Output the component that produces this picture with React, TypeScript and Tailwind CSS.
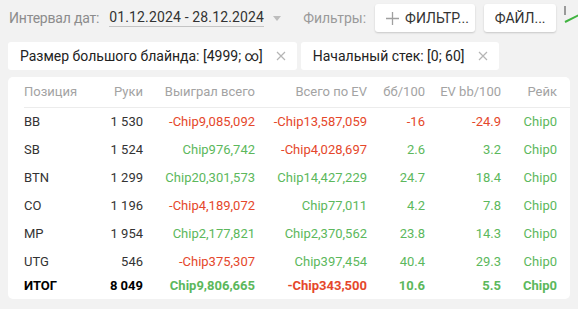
import React from "react"

type Row = {
  pos: string
  hands: string
  won: string
  ev: string
  bb: string
  evbb: string
  rake: string
  total?: boolean
}

const rows: Row[] = [
  { pos: "BB", hands: "1 530", won: "-Chip9,085,092", ev: "-Chip13,587,059", bb: "-16", evbb: "-24.9", rake: "Chip0" },
  { pos: "SB", hands: "1 524", won: "Chip976,742", ev: "-Chip4,028,697", bb: "2.6", evbb: "3.2", rake: "Chip0" },
  { pos: "BTN", hands: "1 299", won: "Chip20,301,573", ev: "Chip14,427,229", bb: "24.7", evbb: "18.4", rake: "Chip0" },
  { pos: "CO", hands: "1 196", won: "-Chip4,189,072", ev: "Chip77,011", bb: "4.2", evbb: "7.8", rake: "Chip0" },
  { pos: "MP", hands: "1 954", won: "Chip2,177,821", ev: "Chip2,370,562", bb: "23.8", evbb: "14.3", rake: "Chip0" },
  { pos: "UTG", hands: "546", won: "-Chip375,307", ev: "Chip397,454", bb: "40.4", evbb: "29.3", rake: "Chip0" },
  { pos: "ИТОГ", hands: "8 049", won: "Chip9,806,665", ev: "-Chip343,500", bb: "10.6", evbb: "5.5", rake: "Chip0", total: true },
]

// красный для отрицательных, зелёный для остальных
const tone = (v: string) => (v.startsWith("-") ? "text-[#e5472b]" : "text-[#5cb85c]")

const cols = "grid grid-cols-[66px_53px_112px_112px_58px_76px_56px]"

function Chip({ label }: { label: string }) {
  return (
    <div className="flex h-7 shrink-0 items-center whitespace-nowrap rounded-[3px] bg-white pl-3 pr-[11px]">
      <span className="text-[14px] text-[#222]">{label}</span>
      <svg className="ml-[13px]" width="10" height="10" viewBox="0 0 10 10">
        <path d="M1 1L9 9M9 1L1 9" stroke="#b5b5b5" strokeWidth="1.2" />
      </svg>
    </div>
  )
}

export default function App() {
  return (
    <div className="h-[309px] w-[578px] overflow-hidden bg-[#f2f2f2] font-['Roboto',sans-serif]">
      {/* Верхняя панель */}
      <div className="flex h-[35px] items-center whitespace-nowrap pl-[9px] pt-[1px] [&>*]:shrink-0">
        <span className="text-[14px] tracking-[-0.2px] text-[#8c8c8c]">Интервал дат:</span>
        <span className="ml-[10px] border-b border-[#c4c4c4] text-[14px] leading-[17px] tracking-[0.15px] text-[#333]">
          01.12.2024 - 28.12.2024
        </span>
        <svg className="ml-[9px]" width="8" height="5" viewBox="0 0 8 5">
          <path d="M0 0H8L4 5Z" fill="#bdbdbd" />
        </svg>
        <span className="ml-[22px] text-[14px] text-[#9a9a9a]">Фильтры:</span>
        <button className="ml-[9px] flex h-[28px] w-[100px] items-center rounded-[3px] bg-white pl-[10px] shadow-[0_1px_2px_rgba(0,0,0,0.18)]">
          <svg width="15" height="15" viewBox="0 0 15 15">
            <path d="M7.5 1V14M1 7.5H14" stroke="#a0a0a0" strokeWidth="1.3" />
          </svg>
          <span className="ml-[5px] text-[14px] text-[#333]">ФИЛЬТР...</span>
        </button>
        <button className="ml-[9px] flex h-[28px] w-[72px] items-center justify-center rounded-[3px] bg-white shadow-[0_1px_2px_rgba(0,0,0,0.18)]">
          <span className="text-[14px] text-[#333]">ФАЙЛ...</span>
        </button>
        <svg className="ml-[7px] mt-[4px] self-start" width="16" height="20" viewBox="0 0 16 20">
          <path d="M2 1V10" stroke="#9a9a9a" strokeWidth="2" />
          <path d="M2 17L16 10" stroke="#3fb33f" strokeWidth="2" />
        </svg>
      </div>

      {/* Активные фильтры */}
      <div className="mt-[7px] flex gap-1 pl-2">
        <Chip label="Размер большого блайнда: [4999; ∞]" />
        <Chip label="Начальный стек: [0; 60]" />
      </div>

      {/* Таблица */}
      <div className="mx-2 mt-[7px] rounded-[5px] bg-white pb-[3px] pl-4 text-[13px]">
        <div className={`${cols} h-[31px] items-center border-b border-[#ececec] text-[#a3a3a3]`}>
          <span>Позиция</span>
          <span className="text-right">Руки</span>
          <span className="text-right">Выиграл всего</span>
          <span className="text-right">Всего по EV</span>
          <span className="text-right">бб/100</span>
          <span className="text-right">EV bb/100</span>
          <span className="text-right">Рейк</span>
        </div>
        {rows.map((r) => (
          <div
            key={r.pos}
            className={`${cols} items-center ${r.total ? "h-[20px] font-bold" : "h-[28px]"}`}
          >
            <span className={r.total ? "text-black" : "text-[#333]"}>{r.pos}</span>
            <span className={`text-right ${r.total ? "text-black" : "text-[#333]"}`}>{r.hands}</span>
            <span className={`text-right ${tone(r.won)}`}>{r.won}</span>
            <span className={`text-right ${tone(r.ev)}`}>{r.ev}</span>
            <span className={`text-right ${tone(r.bb)}`}>{r.bb}</span>
            <span className={`text-right ${tone(r.evbb)}`}>{r.evbb}</span>
            <span className={`text-right ${tone(r.rake)}`}>{r.rake}</span>
          </div>
        ))}
      </div>
    </div>
  )
}
